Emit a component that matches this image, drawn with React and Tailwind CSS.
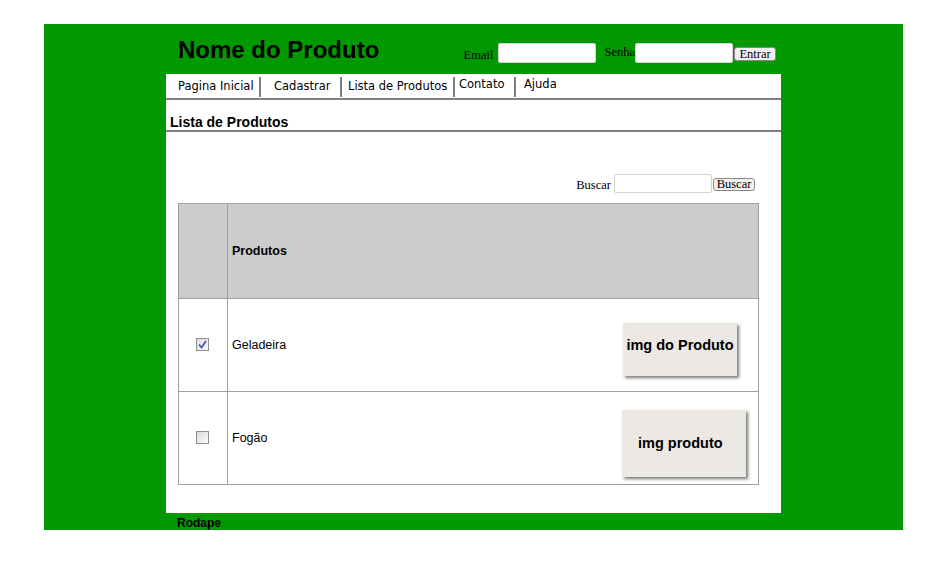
import React from 'react';

const menuItems = [
  { label: 'Pagina Inicial', className: 'w-[93px] pl-[12px]' },
  { label: 'Cadastrar', className: 'w-[79px] pl-[13px]' },
  { label: 'Lista de Produtos', className: 'w-[111px] pl-[6px]' },
  { label: 'Contato', className: 'w-[59px] pl-[4px] -mt-[2px]' },
  { label: 'Ajuda', className: 'pl-[8px] -mt-[2px]' },
];

// Old-style checkbox look (gray frame, pale fill)
const CheckBox = ({ checked }) => (
  <div className="w-[13px] h-[13px] border border-[#8e8f8f] bg-gradient-to-br from-[#dcdcdc] to-[#fbfbfb] flex items-center justify-center">
    {checked && (
      <svg width="9" height="9" viewBox="0 0 9 9">
        <path d="M1 4.5 L3.5 7.5 L8 1" fill="none" stroke="#4a5fa8" strokeWidth="1.8" />
      </svg>
    )}
  </div>
);

const ProductRow = ({ name, checked, img, imgClass }) => (
  <div className="flex h-[93px] border-t border-[#a0a0a0]">
    <div className="w-[49px] border-r border-[#a0a0a0] flex items-center pl-[17px]">
      <CheckBox checked={checked} />
    </div>
    <div className="flex-1 flex items-center justify-between pl-[4px]">
      <span className="text-[12.5px] mt-[2px]">{name}</span>
      <div className={`bg-[#ece9e4] shadow-[2px_2px_3px_#777] flex items-center font-bold text-[14.5px] ${imgClass}`}>
        {img}
      </div>
    </div>
  </div>
);

export default function App() {
  return (
    <div className="min-h-screen bg-white pt-[24px] font-['Liberation_Sans',Arial,sans-serif] text-black">
      <div className="ml-[44px] w-[859px] bg-[#009900]">
        {/* header */}
        <div className="ml-[122px] w-[615px] h-[50px] flex items-start">
          <h1 className="ml-[12px] mt-[12px] text-[24px] leading-[28px] font-bold">Nome do Produto</h1>
          <div className="ml-auto mr-[5px] mt-[18px] flex items-center font-['Liberation_Serif',serif] text-[12.5px]">
            <span className="mt-[4px]">Email</span>
            <input className="ml-[5px] w-[98px] h-[20px] bg-white border border-[#d4d4d4] rounded-[2px]" />
            <span className="ml-[8px] mt-[-2px]">Senha</span>
            <input className="w-[98px] h-[20px] bg-white border border-[#d4d4d4] rounded-[2px]" />
            <button className="ml-[1px] mt-[2px] h-[14px] leading-[12px] w-[42px] bg-[#f0f0f0] border border-[#8a8a8a] rounded-[3px] text-[12.5px]">Entrar</button>
          </div>
        </div>

        {/* content panel */}
        <div className="ml-[122px] w-[615px] h-[439px] bg-white">
          <div className="h-[26px] flex border-b-2 border-[#808080] font-['DejaVu_Sans',sans-serif] text-[11.5px]">
            {menuItems.map((item, i) => (
              <div key={item.label} className="flex items-stretch">
                <div className={`pt-[4px] whitespace-nowrap ${item.className}`}>{item.label}</div>
                {i < menuItems.length - 1 && <div className="w-[2px] mt-[3px] mb-[1px] bg-[#808080]" />}
              </div>
            ))}
          </div>

          <h2 className="pl-[4px] pt-[15px] text-[14px] leading-[15px] font-bold border-b-2 border-[#808080]">Lista de Produtos</h2>

          <div className="flex justify-end items-center pr-[26px] mt-[41px] font-['Liberation_Serif',serif] text-[12.5px]">
            <span className="mt-[3px]">Buscar</span>
            <input className="ml-[3px] w-[98px] h-[19px] bg-white border border-[#d4d4d4] rounded-[2px]" />
            <button className="ml-[1px] mt-[2px] h-[13px] leading-[11px] w-[42px] bg-[#f0f0f0] border border-[#8a8a8a] rounded-[3px] text-[12.5px]">Buscar</button>
          </div>

          <div className="ml-[12px] mt-[8px] w-[581px] border border-[#a0a0a0]">
            <div className="flex h-[94px] bg-[#cccccc]">
              <div className="w-[49px] border-r border-[#a0a0a0]" />
              <div className="flex-1 flex items-center pl-[4px] pt-[2px] text-[12.5px] font-bold">Produtos</div>
            </div>
            <ProductRow name="Geladeira" checked img="img do Produto" imgClass="w-[114px] h-[53px] mr-[21px] mt-[10px] pb-[8px] justify-center" />
            <ProductRow name="Fogão" img="img produto" imgClass="w-[124px] h-[67px] mr-[12px] mt-[12px] pl-[16px]" />
          </div>
        </div>

        {/* footer */}
        <div className="h-[17px] pl-[133px] text-[12px] leading-[20px] font-bold">Rodape</div>
      </div>
    </div>
  );
}
